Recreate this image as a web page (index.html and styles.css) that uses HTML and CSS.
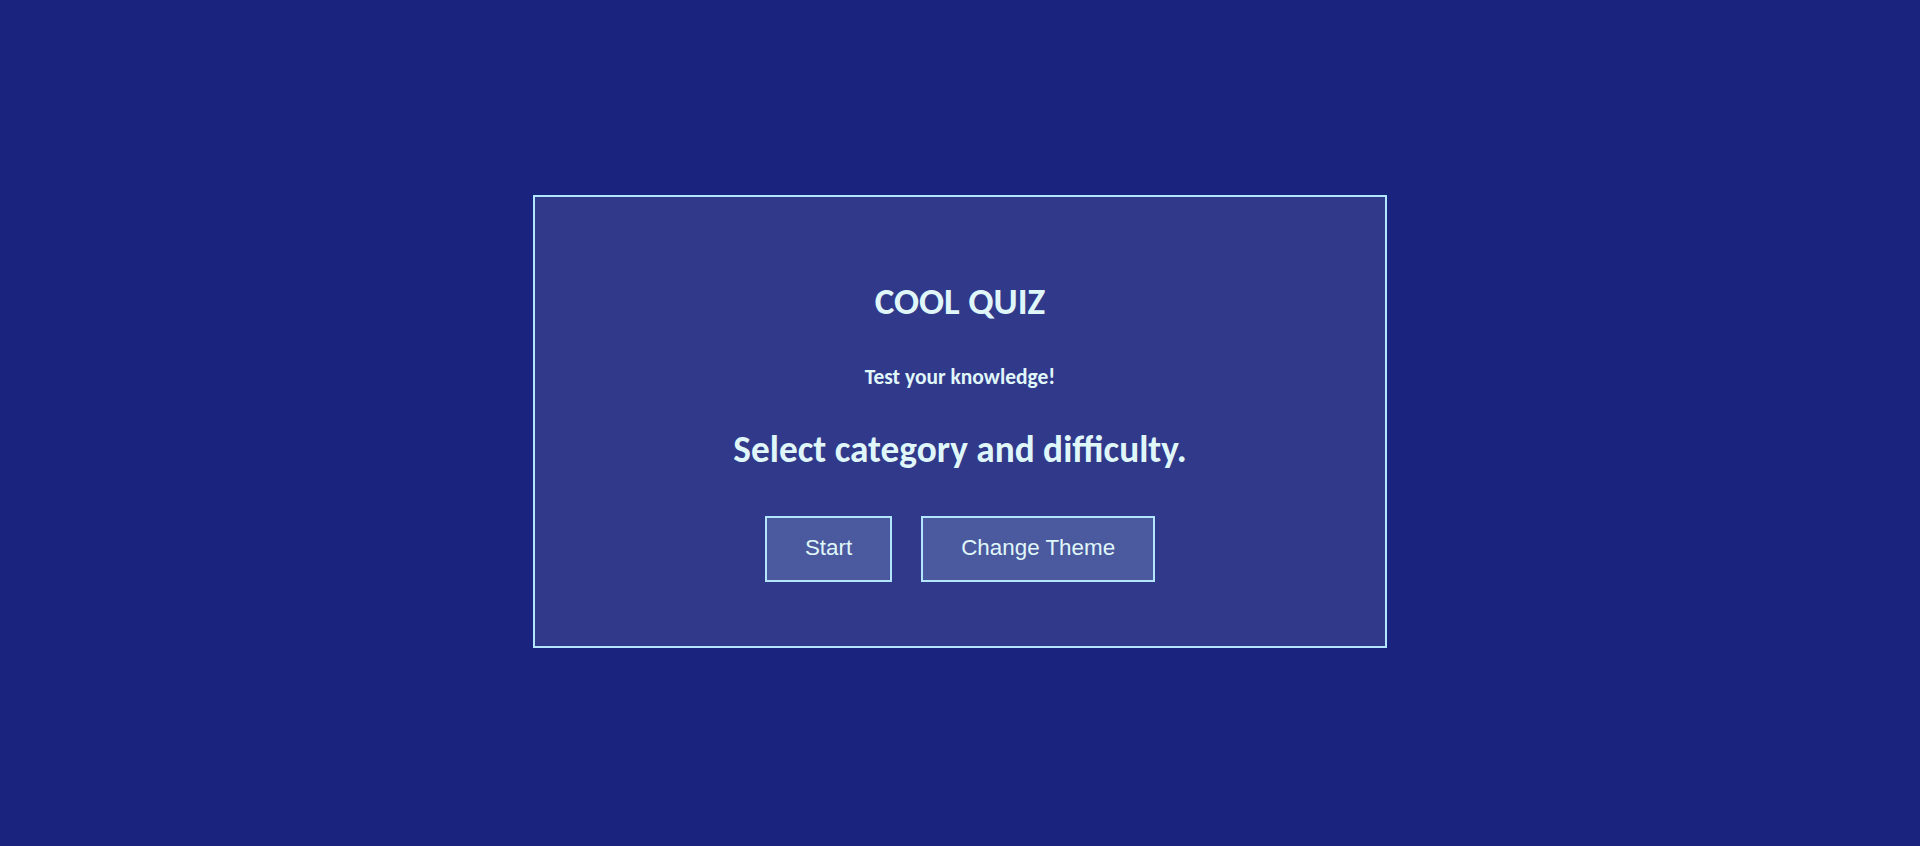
FILE: index.html
```html
<!DOCTYPE html>
<html lang="en">
<head>
<meta charset="utf-8">
<title>Cool Quiz</title>
<link rel="stylesheet" href="styles.css">
</head>
<body>
<main class="card">
  <h1 class="title">COOL QUIZ</h1>
  <p class="subtitle">Test your knowledge!</p>
  <h2 class="prompt">Select category and difficulty.</h2>
  <div class="actions">
    <button class="btn" type="button">Start</button>
    <button class="btn" type="button">Change Theme</button>
  </div>
</main>
</body>
</html>
```

FILE: styles.css
```css
html, body {
  margin: 0;
  padding: 0;
}
body {
  box-sizing: border-box;
  background: #1a237e;
  height: 100vh;
  padding-bottom: 4px;
  display: flex;
  align-items: center;
  justify-content: center;
  font-family: Calibri, Carlito, Lato, "Open Sans", sans-serif;
  color: #e0f7fa;
}
.card {
  box-sizing: border-box;
  width: 854px;
  height: 453px;
  border: 2px solid #b3e5fc;
  background: rgba(255, 255, 255, 0.1);
  text-align: center;
  padding-top: 83px;
}
.title {
  margin: 0;
  font-size: 37px;
  line-height: 44px;
  font-weight: 700;
}
.subtitle {
  margin: 40px 0 0;
  font-size: 21.5px;
  line-height: 26px;
  font-weight: 700;
}
.prompt {
  margin: 37px 0 0;
  font-size: 37.3px;
  line-height: 44px;
  font-weight: 700;
}
.actions {
  margin-top: 45px;
  display: flex;
  justify-content: center;
  gap: 29px;
}
.btn {
  font-family: "Liberation Sans", Arial, sans-serif;
  font-size: 22.4px;
  color: #e0f7fa;
  background: #4b5a9e;
  border: 2px solid #b3e5fc;
  padding: 17px 38px 19px;
  line-height: 26px;
  border-radius: 0;
}
```
